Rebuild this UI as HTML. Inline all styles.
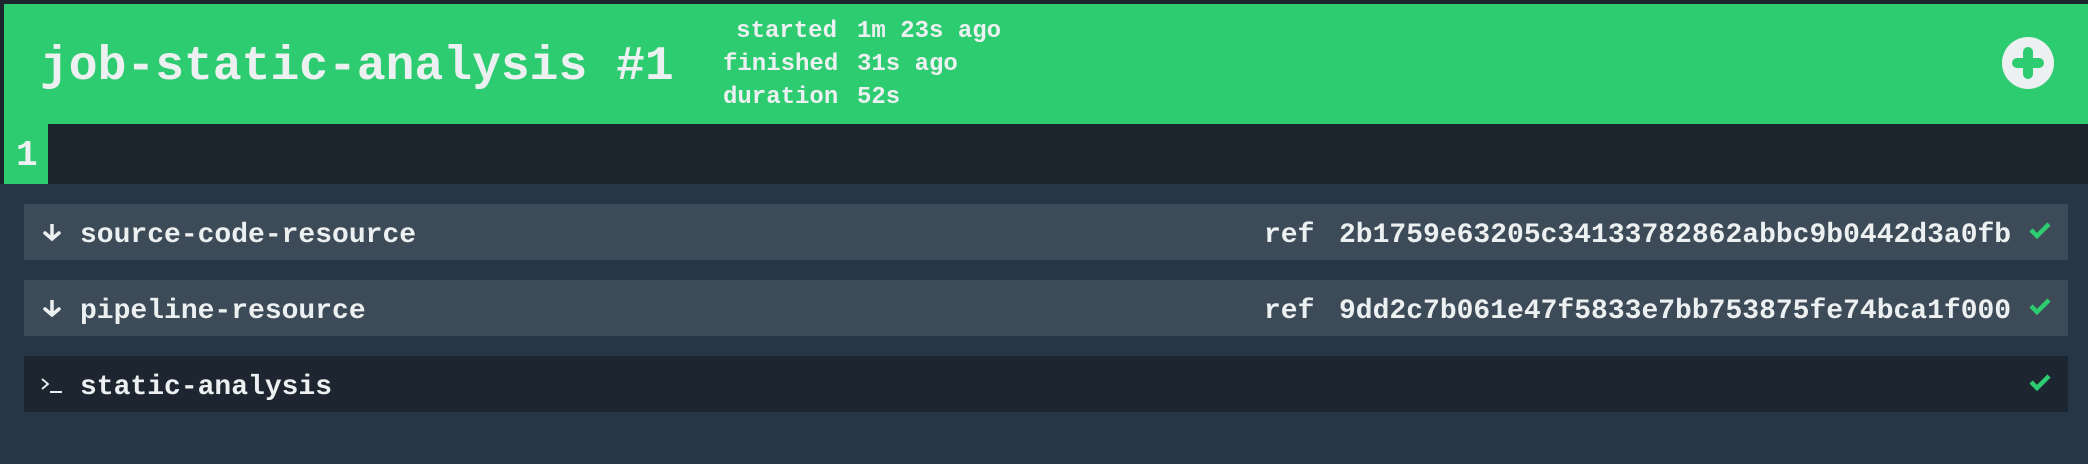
<!DOCTYPE html>
<html><head><meta charset="utf-8"><style>
*{margin:0;padding:0;box-sizing:border-box}
body{width:2088px;height:464px;background:#273647;position:relative;overflow:hidden;font-family:"Liberation Mono","Courier New",monospace;font-weight:bold;color:#ecf0f1}
.a{position:absolute;white-space:pre}
.row{position:absolute;left:24px;width:2044px;height:56px;background:#3d4a57}
.row span{position:absolute;top:4px;line-height:56px;font-size:28px}
</style></head><body>
<div class="a" style="left:0;top:0;width:2088px;height:184px;background:#1c242e"></div>
<div class="a" style="left:4px;top:4px;width:2084px;height:120px;background:#2ecc71"></div>
<div class="a" style="left:4px;top:124px;width:44px;height:60px;background:#2ecc71"></div>
<div class="a" style="left:16px;top:134px;font-size:36px;line-height:44px">1</div>
<div class="a" style="left:40px;top:37px;font-size:48px;line-height:60px">job-static-analysis #1</div>
<div class="a" style="left:723px;top:15px;font-size:24px;line-height:33px;text-align:right;width:114px">started
finished
duration</div>
<div class="a" style="left:857px;top:15px;font-size:24px;line-height:33px">1m 23s ago
31s ago
52s</div>
<svg class="a" style="left:2000px;top:35px" width="56" height="56" viewBox="0 0 56 56"><circle cx="28" cy="28" r="26" fill="#ecf0f1"/><path d="M17 28H39M28 17V39" stroke="#2ecc71" stroke-width="10" stroke-linecap="round"/></svg>

<div class="row" style="top:204px"><svg class="a" style="left:18px;top:20px" width="20" height="18" viewBox="0 0 20 18"><path d="M10 1V15M3 9L10 15L17 9" stroke="#ecf0f1" stroke-width="3.5" fill="none" stroke-linecap="round"/></svg><span style="left:56px">source-code-resource</span><span style="left:1240px">ref</span><span style="left:1315px">2b1759e63205c34133782862abbc9b0442d3a0fb</span></div>
<div class="row" style="top:280px"><svg class="a" style="left:18px;top:20px" width="20" height="18" viewBox="0 0 20 18"><path d="M10 1V15M3 9L10 15L17 9" stroke="#ecf0f1" stroke-width="3.5" fill="none" stroke-linecap="round"/></svg><span style="left:56px">pipeline-resource</span><span style="left:1240px">ref</span><span style="left:1315px">9dd2c7b061e47f5833e7bb753875fe74bca1f000</span></div>
<div class="row" style="top:356px;background:#1d2630"><svg class="a" style="left:16px;top:20px" width="24" height="18" viewBox="0 0 24 18"><path d="M2 3L8 8L2 13" stroke="#ecf0f1" stroke-width="1.8" fill="none"/><path d="M10 16H22" stroke="#ecf0f1" stroke-width="2"/></svg><span style="left:56px">static-analysis</span></div>

<svg class="a" style="left:2028px;top:220px" width="24" height="20" viewBox="0 0 24 20"><path d="M3 10L9 16L21 4" stroke="#2ecc71" stroke-width="4.5" fill="none"/></svg>
<svg class="a" style="left:2028px;top:296px" width="24" height="20" viewBox="0 0 24 20"><path d="M3 10L9 16L21 4" stroke="#2ecc71" stroke-width="4.5" fill="none"/></svg>
<svg class="a" style="left:2028px;top:372px" width="24" height="20" viewBox="0 0 24 20"><path d="M3 10L9 16L21 4" stroke="#2ecc71" stroke-width="4.5" fill="none"/></svg>
</body></html>
